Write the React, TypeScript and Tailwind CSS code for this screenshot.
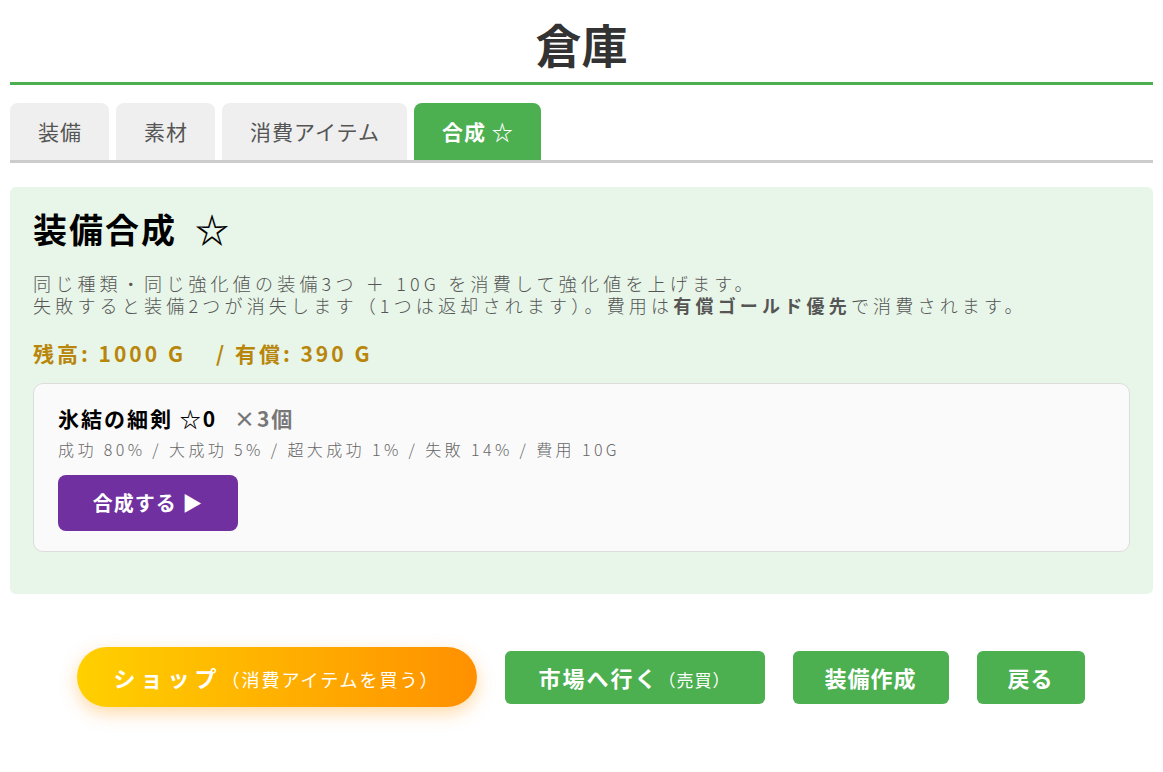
import { useState } from 'react'

const font = "font-['Noto_Sans_CJK_JP','Noto_Sans',sans-serif]"

const tabs = ['装備', '素材', '消費アイテム', '合成 ☆']

function App() {
    const [activeTab, setActiveTab] = useState(3)

    return (
        <div className={`min-h-screen bg-white px-[10px] ${font}`}>
            {/* タイトル */}
            <h1 className="text-center text-[46px] font-bold leading-none text-[#333] pt-[20px] pb-[16px] border-b-[3px] border-[#4caf50]">
                倉庫
            </h1>

            {/* タブ */}
            <div className="mt-[18px] flex gap-[7px] border-b-[3px] border-[#cccccc]">
                {tabs.map((t, i) => (
                    <button
                        key={t}
                        onClick={() => setActiveTab(i)}
                        className={
                            i === activeTab
                                ? 'h-[57px] pl-[28px] pr-[27px] rounded-t-[8px] bg-[#4caf50] text-white font-bold text-[21px] tracking-[1px]'
                                : 'h-[57px] pl-[28px] pr-[27px] rounded-t-[8px] bg-[#efefef] text-[#555] text-[21px] tracking-[1px]'
                        }
                    >
                        {t}
                    </button>
                ))}
            </div>

            {/* 合成パネル */}
            <div className="mt-[24px] rounded-[6px] bg-[#e8f5e9] px-[23px] pt-[20px] pb-[42px]">
                <h2 className="text-[34px] font-bold leading-[44px] tracking-[2px] text-black">
                    装備合成<span className="ml-[18px]">☆</span>
                </h2>
                <p className="mt-[21px] text-[18px] leading-[22px] text-[#555] tracking-[4.2px] font-light">
                    同じ種類・同じ強化値の装備3つ ＋ 10G を消費して強化値を上げます。
                    <br />
                    失敗すると装備2つが消失します（1つは返却されます）。費用は<span className="font-bold">有償ゴールド優先</span>で消費されます。
                </p>
                <div className="mt-[24px] text-[21px] font-bold leading-[26px] tracking-[3px] text-[#b8860b]">
                    残高: 1000 G<span className="ml-[30px]">/ 有償: 390 G</span>
                </div>

                {/* アイテムカード */}
                <div className="mt-[17px] rounded-[10px] border border-[#dddddd] bg-[#fafafa] px-[24px] pt-[20px] pb-[20px]">
                    <div className="text-[21px] font-bold leading-[28px] tracking-[2px] text-black">
                        氷結の細剣 ☆0 <span className="ml-[10px] text-[#777]">×3個</span>
                    </div>
                    <div className="mt-[6px] text-[16px] leading-[22px] tracking-[3.4px] text-[#666] font-light">
                        成功 80% / 大成功 5% / 超大成功 1% / 失敗 14% / 費用 10G
                    </div>
                    <button className="mt-[15px] h-[56px] w-[180px] rounded-[8px] bg-[#7030a0] text-[20px] font-bold tracking-[1px] text-white">
                        合成する ▶
                    </button>
                </div>
            </div>

            {/* 下部ボタン */}
            <div className="mt-[53px] flex items-center justify-center gap-[28px] pr-[2px]">
                <button className="h-[60px] w-[400px] rounded-full bg-gradient-to-r from-[#ffd000] to-[#ff9000] text-white shadow-[0_6px_18px_rgba(255,150,0,0.35)]">
                    <span className="text-[22px] font-bold tracking-[5px]">ショップ</span>
                    <span className="text-[18px] tracking-[2px]">（消費アイテムを買う）</span>
                </button>
                <button className="h-[53px] w-[260px] rounded-[6px] bg-[#4caf50] text-white">
                    <span className="text-[22px] font-bold tracking-[2px]">市場へ行く</span>
                    <span className="text-[17px] tracking-[1px]">（売買）</span>
                </button>
                <button className="h-[53px] w-[156px] rounded-[6px] bg-[#4caf50] text-[22px] font-bold tracking-[1px] text-white">
                    装備作成
                </button>
                <button className="h-[53px] w-[108px] rounded-[6px] bg-[#4caf50] text-[22px] font-bold tracking-[1px] text-white">
                    戻る
                </button>
            </div>
        </div>
    )
}

export default App
